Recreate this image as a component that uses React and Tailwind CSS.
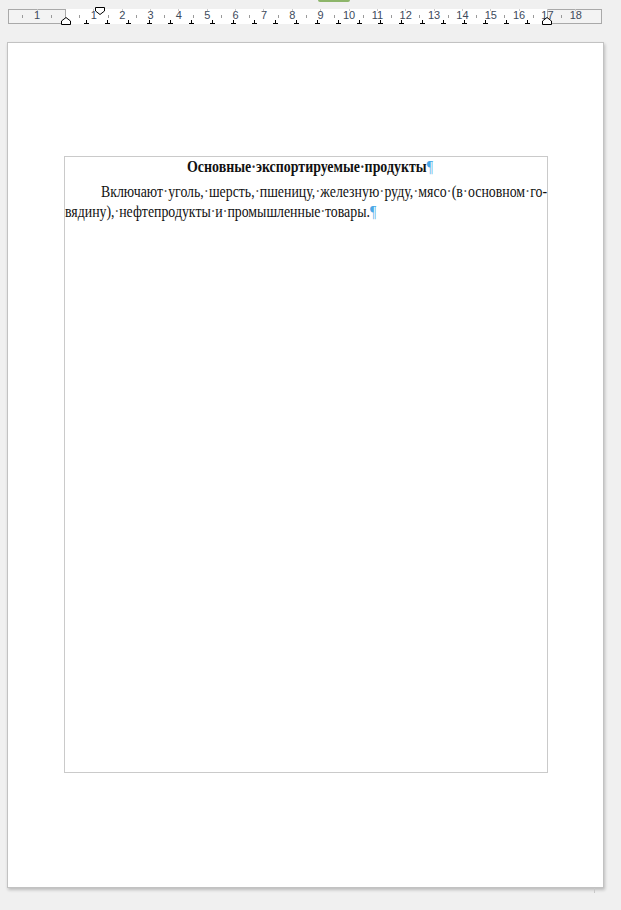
const CM = 28.35;
const ORIGIN = 57; // left page margin, relative to the ruler

const numbers = [
  { n: -1, label: "1" },
  ...Array.from({ length: 18 }, (_, i) => ({ n: i + 1, label: String(i + 1) })),
];
const halfTicks = Array.from({ length: 20 }, (_, i) => i - 1.5);
const tabs = Array.from({ length: 22 }, (_, i) => 78 + i * 21);

const line1 = ["Включают", "уголь,", "шерсть,", "пшеницу,", "железную", "руду,", "мясо", "(в", "основном", "го-"];

function Dot({ bold }) {
  return <span className={bold ? "text-[#333]" : "text-[#555]"}>·</span>;
}

function Pilcrow() {
  return <span className="text-[#4aa8e6] font-normal">¶</span>;
}

function Ruler() {
  return (
    <div className="relative ml-[8px] mt-[9px] flex h-[15px] w-[594px] bg-white font-['Liberation_Sans',sans-serif]">
      {/* margin areas */}
      <div className="h-[15px] w-[58px] border border-[#a9a9a9] bg-[#f3f3f3]" />
      <div className="flex-1" />
      <div className="h-[15px] w-[55px] border border-[#a9a9a9] bg-[#f3f3f3]" />

      {/* scale marks */}
      {halfTicks.map((h) => (
        <div
          key={h}
          className="absolute top-[6px] h-[3px] w-px bg-[#9a9a9a]"
          style={{ left: ORIGIN + h * CM }}
        />
      ))}
      {numbers.map(({ n }) => (
        <div
          key={n}
          className="absolute top-0 h-[2px] w-px bg-[#c8c8c8]"
          style={{ left: ORIGIN + n * CM }}
        />
      ))}
      {numbers.map(({ n, label }) => (
        <span
          key={"l" + n}
          className="absolute top-[-1px] -translate-x-1/2 text-[11px] leading-[15px] text-[#3d4a5c]"
          style={{ left: ORIGIN + n * CM + 0.5 }}
        >
          {label}
        </span>
      ))}

      {/* tab stops */}
      {tabs.map((x) => (
        <div key={x} className="absolute top-[11px]" style={{ left: x - 2 }}>
          <div className="ml-[2px] h-[3px] w-px bg-black" />
          <div className="h-px w-[5px] bg-black" />
        </div>
      ))}

      {/* indent markers */}
      <svg className="absolute left-[53px] top-[8px]" width="10" height="8" viewBox="0 0 10 8">
        <path d="M0.5 7.5 V4 L5 0.5 L9.5 4 V7.5 Z" fill="white" stroke="black" />
      </svg>
      <svg className="absolute left-[87px] top-[-2px]" width="10" height="8" viewBox="0 0 10 8">
        <path d="M0.5 0.5 V4 L5 7.5 L9.5 4 V0.5 Z" fill="white" stroke="black" />
      </svg>
      <svg className="absolute left-[534px] top-[8px]" width="10" height="8" viewBox="0 0 10 8">
        <path d="M0.5 7.5 V4 L5 0.5 L9.5 4 V7.5 Z" fill="white" stroke="black" />
      </svg>
    </div>
  );
}

export default function App() {
  const items = [];
  line1.forEach((w, i) => {
    if (i > 0) items.push(<Dot key={"d" + i} />);
    items.push(<span key={"w" + i}>{w}</span>);
  });

  return (
    <div className="relative h-[910px] w-[621px] overflow-hidden bg-[#f0f0f0]">
      <div className="absolute left-[318px] top-0 h-[2px] w-[32px] rounded-b-sm bg-[#8db56a]" />

      <Ruler />

      {/* page */}
      <div className="ml-[7px] mt-[18px] h-[846px] w-[597px] border border-[#c2c2c2] bg-white pl-[56px] pt-[113px] shadow-[1px_2px_3px_rgba(0,0,0,0.22)]">
        <div className="h-[617px] w-[484px] border border-[#cacaca] font-['Liberation_Serif',serif] text-[16px] text-[#111]">
          <p className="translate-x-[4px] scale-x-[0.87] whitespace-nowrap text-center font-bold leading-[19px]">
            Основные<Dot bold />экспортируемые<Dot bold />продукты<Pilcrow />
          </p>
          <div className="mt-[6px] leading-[20px]">
            <div className="ml-[36px] flex w-[516px] origin-left scale-x-[0.865] justify-between whitespace-nowrap">
              {items}
            </div>
            <p className="w-[556px] origin-left scale-x-[0.865] whitespace-nowrap">
              вядину),<Dot />нефтепродукты<Dot />и<Dot />промышленные<Dot />товары.<Pilcrow />
            </p>
          </div>
        </div>
      </div>

      <div className="absolute left-[594px] top-[888px] h-[5px] w-px bg-[#c8c8c8]" />
    </div>
  );
}
